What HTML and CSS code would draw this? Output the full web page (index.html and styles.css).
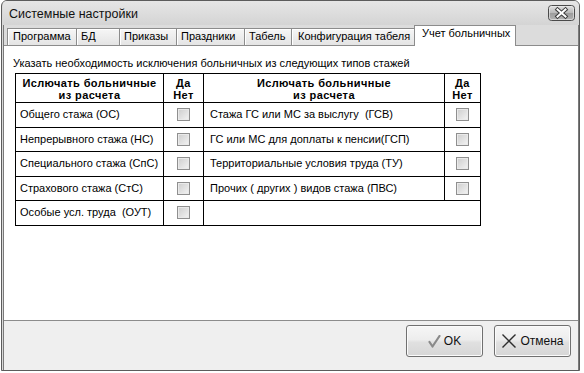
FILE: index.html
```html
<!DOCTYPE html>
<html lang="ru">
<head>
<meta charset="utf-8">
<title>Системные настройки</title>
<link rel="stylesheet" href="styles.css">
</head>
<body>
<div class="window">
  <div class="titlebar">
    <span class="title">Системные настройки</span>
    <span class="close">
      <svg width="27" height="16" viewBox="0 0 27 16">
        <defs>
          <linearGradient id="cg" x1="0" y1="0" x2="0" y2="1">
            <stop offset="0" stop-color="#e2e2e2"/>
            <stop offset="0.5" stop-color="#b8b8b8"/>
            <stop offset="0.51" stop-color="#9c9c9c"/>
            <stop offset="1" stop-color="#b4b4b4"/>
          </linearGradient>
        </defs>
        <rect x="0.5" y="0.5" width="26" height="15" rx="3" fill="url(#cg)" stroke="#4a4a4a"/>
        <rect x="1.5" y="1.5" width="24" height="13" rx="2" fill="none" stroke="#eeeeee" stroke-opacity="0.6"/>
        <path d="M9.5 4.5 L17.5 11.5 M17.5 4.5 L9.5 11.5" stroke="#3c3c3c" stroke-width="4" stroke-linecap="square"/>
        <path d="M9.5 4.5 L17.5 11.5 M17.5 4.5 L9.5 11.5" stroke="#ffffff" stroke-width="2" stroke-linecap="square"/>
      </svg>
    </span>
  </div>
  <div class="client">
    <div class="tabs">
      <span class="tab w69">Программа</span>
      <span class="tab w43">БД</span>
      <span class="tab w57">Приказы</span>
      <span class="tab w68">Праздники</span>
      <span class="tab w47">Табель</span>
      <span class="tab w123 wide">Конфигурация табеля</span>
      <span class="tab active">Учет больничных</span>
    </div>
    <div class="panel">
      <div class="hint">Указать необходимость исключения больничных из следующих типов стажей</div>
      <table class="grid">
        <colgroup>
          <col class="c1"><col class="c2"><col class="c3"><col class="c4">
        </colgroup>
        <tr class="head">
          <th>Ислючать больничные<br>из расчета</th>
          <th>Да<br>Нет</th>
          <th>Ислючать больничные<br>из расчета</th>
          <th>Да<br>Нет</th>
        </tr>
        <tr>
          <td class="name">Общего стажа (ОС)</td>
          <td class="chk"><span class="box"></span></td>
          <td class="name2">Стажа ГС или МС за выслугу&nbsp; (ГСВ)</td>
          <td class="chk"><span class="box"></span></td>
        </tr>
        <tr>
          <td class="name">Непрерывного стажа (НС)</td>
          <td class="chk"><span class="box"></span></td>
          <td class="name2">ГС или МС для доплаты к пенсии(ГСП)</td>
          <td class="chk"><span class="box"></span></td>
        </tr>
        <tr>
          <td class="name">Специального стажа (СпС)</td>
          <td class="chk"><span class="box"></span></td>
          <td class="name2">Территориальные условия труда (ТУ)</td>
          <td class="chk"><span class="box"></span></td>
        </tr>
        <tr>
          <td class="name">Страхового стажа (СтС)</td>
          <td class="chk"><span class="box"></span></td>
          <td class="name2">Прочих ( других ) видов стажа (ПВС)</td>
          <td class="chk"><span class="box"></span></td>
        </tr>
        <tr>
          <td class="name">Особые усл. труда&nbsp; (ОУТ)</td>
          <td class="chk"><span class="box"></span></td>
          <td colspan="2"></td>
        </tr>
      </table>
    </div>
    <div class="footer">
      <span class="btn">
        <svg width="13" height="13" viewBox="0 0 13 13">
          <path d="M1.5 7 L4.5 11.5 L11.5 1" fill="none" stroke="#8a8a8a" stroke-width="2.2" stroke-linejoin="round" stroke-linecap="round"/>
        </svg>
        <span>OK</span>
      </span>
      <span class="btn">
        <svg width="16" height="16" viewBox="0 0 16 16">
          <path d="M1.5 1.5 L14.5 14.5 M14.5 1.5 L1.5 14.5" fill="none" stroke="#2e2e2e" stroke-width="1.4"/>
        </svg>
        <span>Отмена</span>
      </span>
    </div>
  </div>
</div>
</body>
</html>
```
FILE: styles.css
```css
* { box-sizing: border-box; }
html, body { margin: 0; padding: 0; }
body {
  width: 584px;
  height: 373px;
  overflow: hidden;
  background: #ffffff;
  font-family: "Liberation Sans", Arial, sans-serif;
  font-size: 11px;
  color: #000;
}
.window {
  margin-left: 1px;
  width: 579px;
  height: 371px;
  border: 1px solid #5c5c5c;
  border-radius: 6px 6px 0 0;
  background: #d9d9d9;
  padding-left: 1px;
  display: flex;
  flex-direction: column;
  overflow: hidden;
}
.titlebar {
  height: 24px;
  flex: none;
  display: flex;
  align-items: center;
  justify-content: space-between;
  padding: 0 4px 0 6px;
  background: linear-gradient(#e6e6e6, #d4d4d4);
}
.title {
  font-size: 12.5px;
  line-height: 15px;
  padding-top: 2px;
  color: #111;
}
.close { display: block; width: 27px; height: 16px; }
.close svg { display: block; }
.client {
  flex: 1;
  display: flex;
  flex-direction: column;
  border-left: 1px solid #7a7a7a;
  border-right: 1px solid #7a7a7a;
  background: #dcdcdc;
}
.tabs {
  height: 20px;
  flex: none;
  display: flex;
  align-items: flex-end;
  padding-left: 3px;
}
.tab {
  height: 17px;
  border: 1px solid #8c8c8c;
  border-right: none;
  border-bottom: none;
  background: linear-gradient(#f6f6f6, #e4e4e4);
  box-shadow: inset 1px 1px 0 #ffffff;
  padding-left: 4px;
  font-size: 11px;
  line-height: 15px;
  white-space: nowrap;
}
.w69 { width: 69px; padding-left: 5px; }
.w43 { width: 43px; }
.w57 { width: 57px; }
.w68 { width: 68px; }
.w47 { width: 47px; }
.w123 { width: 123px; }
.wide { padding-left: 6px; }
.tab.active {
  width: 102px;
  height: 21px;
  margin-bottom: -1px;
  border-right: 1px solid #8c8c8c;
  background: #ffffff;
  box-shadow: none;
  padding-left: 7px;
  line-height: 15px;
  position: relative;
  z-index: 1;
}
.panel {
  height: 276px;
  flex: none;
  background: #ffffff;
  border-top: 1px solid #8c8c8c;
  border-bottom: 1px solid #8c8c8c;
  padding: 11px 0 0 9px;
}
.hint {
  line-height: 13px;
  white-space: nowrap;
}
.grid {
  margin: 3px 0 0 2px;
  border-collapse: collapse;
  table-layout: fixed;
  width: 466px;
  border: 1px solid #000;
}
.c1 { width: 148px; }
.c2 { width: 40px; }
.c3 { width: 241px; }
.c4 { width: 36px; }
.grid th, .grid td {
  border: 1px solid #000;
  padding: 0;
}
.grid th {
  height: 29px;
  font-weight: bold;
  font-size: 11px;
  line-height: 12px;
  text-align: center;
  letter-spacing: 0.4px;
  vertical-align: middle;
  padding-top: 1px;
}
.grid td {
  height: 24.5px;
  line-height: 13px;
  white-space: nowrap;
  vertical-align: middle;
}
.grid td.name { padding-left: 4px; }
.grid td.name2 { padding-left: 6px; }
.grid td.chk { text-align: center; }
.box {
  display: inline-block;
  vertical-align: middle;
  width: 13px;
  height: 13px;
  border: 1px solid #8f8f8f;
  background: linear-gradient(135deg, #cdcdcd, #f4f4f4);
  box-shadow: inset 0 0 0 1px #eaeaea;
  margin-top: -1px;
}
.footer {
  flex: 1;
  background: #efefef;
  display: flex;
  justify-content: flex-end;
  align-items: flex-start;
  gap: 11px;
  padding: 4px 7px 0 0;
}
.btn {
  width: 77px;
  height: 32px;
  border: 1px solid #707070;
  border-radius: 3px;
  background: linear-gradient(#f6f6f6 0%, #ededed 45%, #e0e0e0 55%, #d6d6d6 100%);
  box-shadow: inset 0 0 0 1px #fbfbfb;
  display: flex;
  align-items: center;
  justify-content: center;
  gap: 3px;
  font-size: 12px;
  color: #111;
}
.btn svg { display: block; }
```
